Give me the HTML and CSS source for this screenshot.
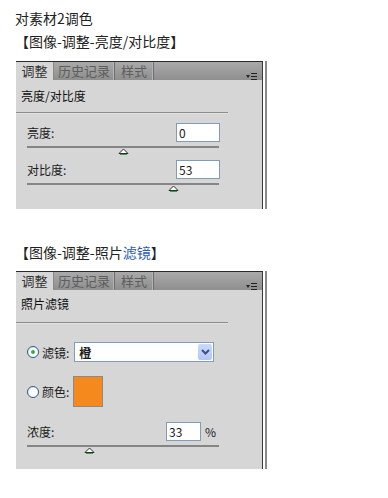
FILE: index.html
```html
<!DOCTYPE html>
<html lang="zh-CN">
<head>
    <meta charset="UTF-8" />
    <title>对素材2调色</title>
    <link rel="stylesheet" href="styles.css">
</head>
<body>
    <div class="intro">
        <p class="line">对素材2调色</p>
        <p class="line">【图像-调整-亮度/对比度】</p>
    </div>

    <!-- 亮度/对比度 panel -->
    <div class="panel">
        <div class="tabbar">
            <span class="tab active">调整</span>
            <span class="tab history">历史记录</span>
            <span class="tab style">样式</span>
            <span class="menu">
                <svg width="11" height="8" viewBox="0 0 11 8">
                    <polygon points="0,2 4,2 2,5" fill="#222"/>
                    <rect x="5" y="0" width="6" height="1" fill="#222"/>
                    <rect x="5" y="3" width="6" height="1" fill="#222"/>
                    <rect x="5" y="6" width="6" height="1" fill="#222"/>
                </svg>
            </span>
        </div>
        <div class="panel-body">
            <div class="panel-title">亮度/对比度</div>
            <div class="sep"></div>
            <div class="field first">
                <div class="field-row">
                    <span class="label">亮度:</span>
                    <span class="num">0</span>
                </div>
                <div class="track">
                    <svg class="thumb" style="left: 91px" width="11" height="7" viewBox="0 0 11 7">
                        <polygon points="1,5.5 5.5,1 10,5.5" fill="#fff" stroke="#2f2f2f"/>
                        <line x1="2" y1="6.5" x2="9" y2="6.5" stroke="#2fa34a"/>
                    </svg>
                </div>
            </div>
            <div class="field">
                <div class="field-row">
                    <span class="label">对比度:</span>
                    <span class="num">53</span>
                </div>
                <div class="track">
                    <svg class="thumb" style="left: 141px" width="11" height="7" viewBox="0 0 11 7">
                        <polygon points="1,5.5 5.5,1 10,5.5" fill="#fff" stroke="#2f2f2f"/>
                        <line x1="2" y1="6.5" x2="9" y2="6.5" stroke="#2fa34a"/>
                    </svg>
                </div>
            </div>
        </div>
    </div>

    <div class="intro second">
        <p class="line">【图像-调整-照片<span class="blue">滤镜</span>】</p>
    </div>

    <!-- 照片滤镜 panel -->
    <div class="panel tall">
        <div class="tabbar">
            <span class="tab active">调整</span>
            <span class="tab history">历史记录</span>
            <span class="tab style">样式</span>
            <span class="menu">
                <svg width="11" height="8" viewBox="0 0 11 8">
                    <polygon points="0,2 4,2 2,5" fill="#222"/>
                    <rect x="5" y="0" width="6" height="1" fill="#222"/>
                    <rect x="5" y="3" width="6" height="1" fill="#222"/>
                    <rect x="5" y="6" width="6" height="1" fill="#222"/>
                </svg>
            </span>
        </div>
        <div class="panel-body">
            <div class="panel-title alt">照片滤镜</div>
            <div class="sep"></div>
            <div class="option filter">
                <span class="radio checked"></span>
                <span class="label">滤镜:</span>
                <span class="select">
                    <span class="select-text">橙</span>
                    <span class="select-btn">
                        <svg width="9" height="6" viewBox="0 0 9 6">
                            <polyline points="1,1 4.5,4.5 8,1" fill="none" stroke="#3b4f8a" stroke-width="2"/>
                        </svg>
                    </span>
                </span>
            </div>
            <div class="option color">
                <span class="radio"></span>
                <span class="label">颜色:</span>
                <span class="swatch"></span>
            </div>
            <div class="field density">
                <div class="field-row">
                    <span class="label">浓度:</span>
                    <span class="num small">33</span>
                    <span class="pct">%</span>
                </div>
                <div class="track">
                    <svg class="thumb" style="left: 57px" width="11" height="7" viewBox="0 0 11 7">
                        <polygon points="1,5.5 5.5,1 10,5.5" fill="#fff" stroke="#2f2f2f"/>
                        <line x1="2" y1="6.5" x2="9" y2="6.5" stroke="#2fa34a"/>
                    </svg>
                </div>
            </div>
        </div>
    </div>
</body>
</html>
```

FILE: styles.css
```css
body {
    margin: 0;
    background: #ffffff;
    font-family: "Noto Sans CJK SC", "Liberation Sans", sans-serif;
    color: #1a1a1a;
}
.intro {
    padding: 7px 0 0 15px;
}
.intro.second {
    padding: 32px 0 0 15px;
}
.line {
    margin: 0;
    font-size: 14px;
    line-height: 23px;
    color: #222222;
}
.blue {
    color: #2a5db0;
}
.panel {
    width: 246px;
    height: 148px;
    margin: 8px 0 0 16px;
    background: #d6d6d6;
    border-right: 1px solid #3a3a3a;
    box-shadow: 2px 0 0 #ffffff, 4px 0 0 #8a8a8a;
    font-size: 12px;
}
.panel.tall {
    height: 198px;
    margin-top: 7px;
}
.tabbar {
    display: flex;
    height: 18px;
    border-top: 1px solid #2b2b2b;
    background: linear-gradient(#a9a9a9, #8e8e8e);
}
.tab {
    display: flex;
    align-items: center;
    justify-content: center;
    font-size: 13px;
    color: #5d5d5d;
    line-height: 18px;
    border-right: 1px solid #6e6e6e;
    box-shadow: inset -1px 0 0 #b4b4b4;
}
.tab.active {
    width: 37px;
    color: #333333;
    background: #d6d6d6;
    box-shadow: none;
    border-right-color: #8a8a8a;
}
.tab.history {
    width: 60px;
}
.tab.style {
    width: 38px;
}
.menu {
    margin-left: auto;
    padding: 5px 5px 0 0;
}
.panel-title {
    height: 32px;
    line-height: 32px;
    padding-left: 5px;
    color: #111111;
}
.panel-title.alt {
    line-height: 28px;
}
.sep {
    width: 212px;
    height: 1px;
    background: #8c8c8c;
    border-bottom: 1px solid #e2e2e2;
}
.field {
    padding-left: 11px;
    width: 192px;
}
.field.first {
    margin-top: 9px;
}
.field + .field {
    margin-top: 12px;
}
.field-row {
    display: flex;
    align-items: center;
    height: 19px;
}
.label {
    color: #1a1a1a;
}
.num {
    margin-left: auto;
    margin-right: -1px;
    width: 40px;
    height: 17px;
    line-height: 17px;
    padding-left: 2px;
    background: #ffffff;
    border: 1px solid #7f9db9;
}
.num.small {
    width: 31px;
    margin-right: 0;
}
.pct {
    width: 14px;
    padding-left: 4px;
}
.track {
    position: relative;
    height: 2px;
    margin-top: 4px;
    background: #858585;
}
.thumb {
    position: absolute;
    top: 2px;
}
.option {
    display: flex;
    align-items: center;
    padding-left: 11px;
}
.option.filter {
    margin-top: 18px;
    height: 20px;
}
.option.color {
    margin-top: 14px;
    height: 31px;
}
.radio {
    width: 10px;
    height: 10px;
    margin-right: 3px;
    border: 1px solid #2a5a86;
    border-radius: 50%;
    background: radial-gradient(circle at 60% 60%, #ffffff 40%, #d6dbe0 100%);
    position: relative;
}
.radio.checked::after {
    content: "";
    position: absolute;
    left: 3px;
    top: 3px;
    width: 4px;
    height: 4px;
    border-radius: 50%;
    background: #2fb344;
}
.select {
    display: flex;
    align-items: center;
    margin-left: 5px;
    width: 138px;
    height: 18px;
    background: #ffffff;
    border: 1px solid #7f9db9;
}
.select-text {
    padding-left: 4px;
    font-weight: bold;
}
.select-btn {
    display: flex;
    align-items: center;
    justify-content: center;
    margin-left: auto;
    margin-right: 1px;
    width: 14px;
    height: 16px;
    background: linear-gradient(#cbd9fc, #b4c6f6);
    border-radius: 2px;
}
.swatch {
    margin-left: 4px;
    width: 28px;
    height: 29px;
    background: #f5891e;
    border: 1px solid #8a8a8a;
}
.field.density {
    margin-top: 15px;
    width: 192px;
}
```
